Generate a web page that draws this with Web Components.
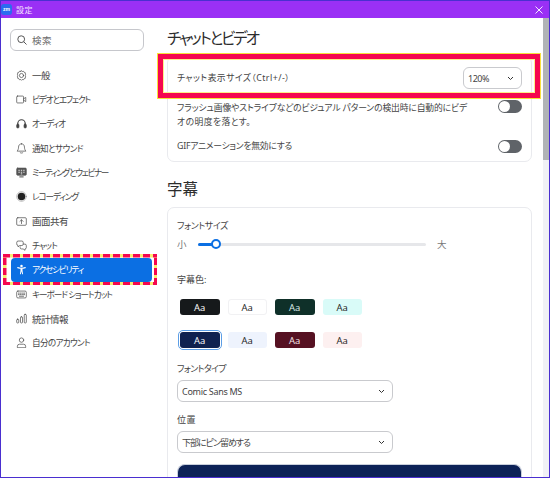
<!DOCTYPE html>
<html lang="ja"><head><meta charset="utf-8"><title>設定</title>
<style>
html,body{margin:0;height:100%;overflow:hidden;background:#fff}
body{font-family:"Noto Sans","Noto Sans CJK JP",sans-serif;font-size:9.5px;color:#444;font-feature-settings:"palt"}
</style></head><body>
<settings-window>
  <title-bar slot="top">設定</title-bar>
  <side-nav slot="side">
    <search-box>検索</search-box>
    <nav-item icon="gear" fit="18">一般</nav-item>
    <nav-item icon="video" fit="58" kana>ビデオとエフェクト</nav-item>
    <nav-item icon="head" fit="33" kana>オーディオ</nav-item>
    <nav-item icon="bell" fit="51" kana>通知とサウンド</nav-item>
    <nav-item icon="meet" fit="76" kana>ミーティングとウェビナー</nav-item>
    <nav-item icon="rec" fit="46" kana>レコーディング</nav-item>
    <nav-item icon="share" fit="36">画面共有</nav-item>
    <nav-item icon="chat" fit="25" kana>チャット</nav-item>
    <nav-item icon="access" active fit="51" kana>アクセシビリティ</nav-item>
    <nav-item icon="keys" fit="80" kana>キーボード ショートカット</nav-item>
    <nav-item icon="stats" fit="36">統計情報</nav-item>
    <nav-item icon="user" fit="58" kana>自分のアカウント</nav-item>
  </side-nav>
  <section-head style="margin-top:10px" fit="91">チャットとビデオ</section-head>
  <settings-card style="margin-top:8px">
    <setting-row h="42" center><line-text fit="113">チャット表示サイズ（Ctrl+/-）</line-text><drop-select slot="end" w="59" fit="21">120%</drop-select></setting-row>
    <setting-row h="32" pad="2"><line-text fit="290">フラッシュ画像やストライプなどのビジュアル パターンの検出時に自動的にビデ</line-text><line-text fit="74">オの明度を落とす。</line-text><toggle-switch slot="end"></toggle-switch></setting-row>
    <setting-row h="30" center><line-text fit="115">GIFアニメーションを無効にする</line-text><toggle-switch slot="end"></toggle-switch></setting-row>
  </settings-card>
  <section-head style="margin-top:17px" fit="31">字幕</section-head>
  <settings-card style="margin-top:8px;padding-top:11px">
    <field-label fit="51">フォントサイズ</field-label>
    <font-slider style="margin-top:3px"></font-slider>
    <field-label style="margin-top:21px">字幕色:</field-label>
    <swatch-row style="margin-top:12px">
      <caption-swatch bg="#16191b" fg="#fff">Aa</caption-swatch>
      <caption-swatch bg="#fff" fg="#222" line="#f1f1f3">Aa</caption-swatch>
      <caption-swatch bg="#0f3029" fg="#dfeeea">Aa</caption-swatch>
      <caption-swatch bg="#d9fbf8" fg="#222">Aa</caption-swatch>
    </swatch-row>
    <swatch-row style="margin-top:17px">
      <caption-swatch bg="#10214f" fg="#fff" selected>Aa</caption-swatch>
      <caption-swatch bg="#eef3fd" fg="#222">Aa</caption-swatch>
      <caption-swatch bg="#561122" fg="#f5e6e9">Aa</caption-swatch>
      <caption-swatch bg="#fdf0f0" fg="#222">Aa</caption-swatch>
    </swatch-row>
    <field-label style="margin-top:14px" fit="49">フォントタイプ</field-label>
    <drop-select w="216" style="margin-top:4px" fit="60">Comic Sans MS</drop-select>
    <field-label style="margin-top:11px" fit="19">位置</field-label>
    <drop-select w="216" style="margin-top:4px" fit="68">下部にピン留めする</drop-select>
    <caption-preview style="margin-top:11px"></caption-preview>
  </settings-card>
</settings-window>
<script>
function def(name,css,html,extra){
  customElements.define(name,class extends HTMLElement{
    constructor(){super();this.attachShadow({mode:'open'}).innerHTML='<style>'+css+'</style>'+html}
    connectedCallback(){extra&&extra(this)}
  })
}
const I={
gear:'<path d="M8 1l1.200 1.200 1.800-.3.9 1.500 1.700.6-.1 1.800L14 7l-.5 1 .5 1-.5 1.200.1 1.800-1.700.6-.9 1.500-1.800-.3L8 15l-1.200-1.200-1.800.3-.9-1.500-1.700-.6.1-1.800L2 9l.5-1L2 7l.5-1.200-.1-1.800 1.700-.6.9-1.500 1.800.3z"/><circle cx="8" cy="8" r="3"/>',
video:'<rect x="1" y="3" width="10" height="10" rx="1.200"/><path d="M11 7l3.200-2v6L11 9"/>',
head:'<path d="M2.600 10.500V8a5.400 5.400 0 0 1 10.800 0v2.500" stroke-width="1.700"/><rect x="1" y="9" width="3.300" height="5.400" rx="1.200" fill="currentColor"/><rect x="11.700" y="9" width="3.300" height="5.400" rx="1.200" fill="currentColor"/>',
bell:'<path d="M8 1.200c-2.800 0-4.300 2.100-4.300 4.800 0 2.900-.9 4.300-2.200 5.800h13c-1.300-1.500-2.200-2.900-2.200-5.800 0-2.700-1.500-4.800-4.300-4.800zM5.800 13.800c.6 1.200 3.800 1.200 4.400 0"/>',
meet:'<rect x="1" y="1.600" width="14" height="10.400" rx="1.400" fill="#555" stroke="#555"/><path d="M5.500 14.400h5" stroke-width="1.400"/><path d="M3.500 4.800h2M7 4.800h2M10.500 4.800h2M3.500 7.600h2M7 7.600h2M7 10h2M10.500 7.600h2" stroke="#fff" stroke-width="1.200" stroke-linecap="butt"/>',
rec:'<circle cx="8" cy="8" r="7" stroke="#888" stroke-width=".8"/><circle cx="8" cy="8" r="5.500" fill="#222" stroke="none"/>',
share:'<rect x="1" y="2.500" width="14" height="11" rx="1.600"/><path d="M8 11V5.600M5.700 7.800L8 5.500l2.300 2.300"/>',
chat:'<path d="M1 3.500A2 2 0 0 1 3 1.500h5.500a2 2 0 0 1 2 2V6a2 2 0 0 1-2 2H5.300L3 10V8A2 2 0 0 1 1 6z"/><path d="M11 6h2a2 2 0 0 1 2 2v3a2 2 0 0 1-2 2v2l-2.600-2H8a2 2 0 0 1-2-2V9.800"/>',
access:'<circle cx="8" cy="2.800" r="1.800" fill="currentColor" stroke="none"/><path d="M2.500 5.300c3.500 1 7.500 1 11 0" stroke-width="1.600"/><path d="M6.500 6.200h3v3.600l.8 5H9L8 10.500 7 14.800H5.700l.8-5z" fill="currentColor" stroke="none"/>',
keys:'<rect x="1" y="3" width="14" height="10" rx="1.800"/><path d="M3.500 6h1M6 6h1M8.500 6h1M11 6h1.500M3.500 8.200h1M6 8.200h1M8.500 8.200h1M11 8.200h1.500M5 10.500h6" stroke-width="1.100"/>',
stats:'<rect x="1" y="9" width="3" height="5.500" rx="1.200"/><rect x="6.500" y="5.500" width="3" height="9" rx="1.200"/><rect x="12" y="2" width="3" height="12.500" rx="1.200"/>',
user:'<circle cx="8" cy="4.500" r="3.200"/><path d="M2 15v-1.500a3 3 0 0 1 3-3h6a3 3 0 0 1 3 3V15z"/>'
};
def('settings-window',
`:host{display:grid;grid-template-columns:166px 376px 6px;grid-template-rows:17px 1fr;width:550px;height:478px;box-sizing:border-box;border:1px solid #4a2fd0;background:#fff;overflow:hidden;position:relative}
.top{grid-column:1/4}.main{overflow:hidden;position:relative}
.bar{background:#f1f1f6;position:relative}.thumb{background:#b1b3b6;height:142px}
.mark{position:absolute;box-sizing:border-box;pointer-events:none}
.solid{left:156px;top:52px;width:384px;height:46px;border:6px solid #f5074f;outline:1px solid #f7e23a;outline-offset:-1px;box-shadow:inset 0 0 0 1px #fbf08a}
.dash{left:2px;top:253px;width:154px;height:31px;background:
 repeating-linear-gradient(90deg,#f5074f 0 7px,#f9ea70 7px 10px) top/100% 3.500px no-repeat,
 repeating-linear-gradient(90deg,#f5074f 0 7px,#f9ea70 7px 10px) bottom/100% 3.500px no-repeat,
 repeating-linear-gradient(0deg,#f5074f 0 7px,#f9ea70 7px 10px) left/3.500px 100% no-repeat,
 repeating-linear-gradient(0deg,#f5074f 0 7px,#f9ea70 7px 10px) right/3.500px 100% no-repeat}`,
`<div class="top"><slot name="top"></slot></div><div><slot name="side"></slot></div><div class="main"><slot></slot></div><div class="bar"><div class="thumb"></div></div><div class="mark solid"></div><div class="mark dash"></div>`);
def('title-bar',
`:host{display:flex;align-items:center;height:17px;background:#9a30f5;color:#f3e3ff;font-size:8px;letter-spacing:.6px;padding-right:6px}
.logo{width:11px;height:11px;margin:0 4px 0 0;background:#2a6cf0;border-radius:3px;color:#fff;font:700 5px/11px "Liberation Sans",sans-serif;text-align:center;letter-spacing:0}
.t{flex:1}svg{width:8px;height:8px;stroke:#f5e8ff;stroke-width:1;fill:none}`,
`<div class="logo">zm</div><div class="t"><slot></slot></div><svg viewBox="0 0 8 8"><path d="M.5.5l7 7M7.500.5l-7 7"/></svg>`);
def('side-nav',`:host{display:block;padding:11px 0 0 9px}`,`<slot></slot>`);
def('search-box',
`:host{display:flex;align-items:center;gap:5px;box-sizing:border-box;width:134px;height:22px;border:1px solid #c6c7cc;border-radius:6px;padding-left:6px;margin-bottom:12px;color:#6b6b6b;letter-spacing:.6px}
svg{width:10px;height:10px;stroke:#555;fill:none;stroke-width:1}`,
`<svg viewBox="0 0 10 10"><circle cx="4.200" cy="4.200" r="3.400"/><path d="M6.700 6.700l2.800 2.800"/></svg><slot></slot>`);
def('nav-item',
`:host{display:flex;align-items:center;box-sizing:border-box;width:141px;height:24.350px;margin-left:1px;padding-left:5px;gap:5px;border-radius:4px;white-space:pre}
:host([kana]){font-size:8.6px}
:host([active]){background:#0b6fe3;color:#fff}
svg{width:11px;height:11px;flex:none;fill:none;stroke:currentColor;stroke-width:1;stroke-linejoin:round;stroke-linecap:round}`,
`<svg viewBox="0 0 16 16"></svg><slot></slot>`,
el=>{el.shadowRoot.querySelector('svg').innerHTML=I[el.getAttribute('icon')]});
def('section-head',`:host{display:block;height:20px;line-height:20px;font-size:15.5px;color:#2c2c2c;white-space:nowrap}`,`<slot></slot>`);
def('settings-card',`:host{display:block;box-sizing:border-box;width:365px;border:1px solid #e9eaee;border-radius:7px;padding:0 9px}`,`<slot></slot>`);
def('line-text',`:host{display:block;line-height:14px;font-size:8.8px;white-space:pre}`,`<slot></slot>`);
def('setting-row',
`:host{display:flex;justify-content:space-between;align-items:flex-start}
:host([center]){align-items:center}.b{display:block}`,
`<div class="b"><slot></slot></div><slot name="end"></slot>`,
el=>{el.style.height=el.getAttribute('h')+'px';
 if(el.getAttribute('pad'))el.shadowRoot.querySelector('.b').style.marginTop=el.getAttribute('pad')+'px'});
def('toggle-switch',
`:host{display:block;box-sizing:border-box;width:24px;height:13px;border-radius:7px;background:#5f6368;padding:1px;margin:1px 0 0}
i{display:block;width:11px;height:11px;border-radius:50%;background:#fff}`,`<i></i>`);
def('drop-select',
`:host{display:flex;align-items:center;justify-content:space-between;box-sizing:border-box;height:22px;border:1px solid #c9cace;border-radius:6px;padding:0 7px 0 4px;background:#fff;font-size:9px}
svg{width:7px;height:5px;fill:none;stroke:#333;stroke-width:1}`,
`<slot></slot><svg viewBox="0 0 7 5"><path d="M1 1l2.500 2.500L6 1"/></svg>`,
el=>{el.style.width=el.getAttribute('w')+'px'});
def('field-label',`:host{display:block;height:14px;line-height:14px;font-size:9px;white-space:pre}`,`<slot></slot>`);
def('font-slider',
`:host{display:flex;align-items:center;height:16px;color:#777}
.track{position:relative;width:228px;height:3px;background:#e6e7ea;border-radius:2px;margin:0 11px 0 13px}
.fill{position:absolute;left:0;top:0;height:3px;width:17px;background:#0b6fe3;border-radius:2px}
.thumb{position:absolute;left:12.500px;top:-3.500px;width:10px;height:10px;box-sizing:border-box;border:2px solid #0b6fe3;border-radius:50%;background:#fff}
span{width:8px}`,
`<span>小</span><div class="track"><div class="fill"></div><div class="thumb"></div></div><span>大</span>`);
def('swatch-row',`:host{display:flex;gap:8px;margin-left:3px;height:16px}`,`<slot></slot>`);
def('caption-swatch',
`:host{display:flex;align-items:center;justify-content:center;box-sizing:border-box;width:39.500px;height:16px;border-radius:3px;font-family:"Open Sans",sans-serif;font-size:9.5px}
:host([selected]){outline:1.500px solid #5c9ee6;outline-offset:1px}`,
`<slot></slot>`,
el=>{el.style.background=el.getAttribute('bg');el.style.color=el.getAttribute('fg');
 if(el.getAttribute('line'))el.style.border='1px solid '+el.getAttribute('line')});
def('caption-preview',`:host{display:block;height:40px;background:#0d2257;border-radius:8px 8px 0 0;border:1px solid #c9cfdc;border-bottom:0;box-sizing:border-box}`,``);
/* Tighten the proportional kana to the narrower Windows UI font widths of the original. */
document.querySelectorAll('[fit]').forEach(el=>{
  const r=document.createRange();r.selectNodeContents(el);
  const w=r.getBoundingClientRect().width,n=el.textContent.trim().length;
  el.style.letterSpacing=((+el.getAttribute('fit')-w)/n).toFixed(3)+'px';
});
</script>
</body></html>
